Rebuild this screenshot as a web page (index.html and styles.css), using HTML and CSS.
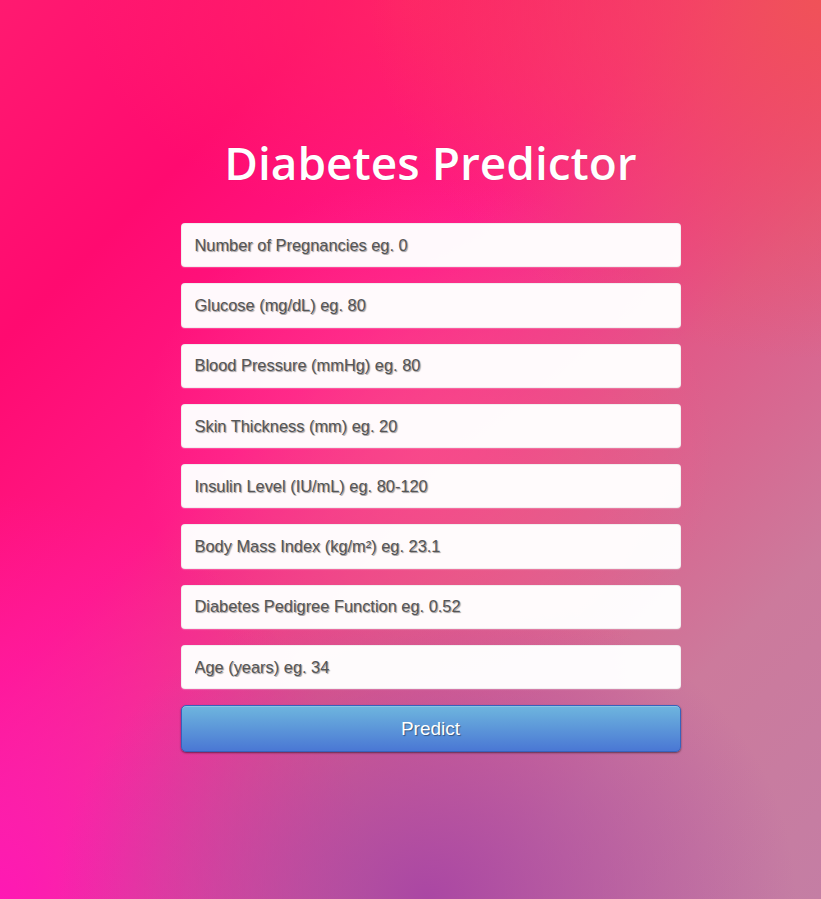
FILE: index.html
```html
<!DOCTYPE html>
<html lang="en">
<head>
<meta charset="utf-8">
<title>Diabetes Predictor</title>
<link rel="stylesheet" href="styles.css">
</head>
<body>
<div class="page">
  <div class="login">
    <h1 class="title">Diabetes Predictor</h1>
    <form class="form">
      <input class="field" type="text" placeholder="Number of Pregnancies eg. 0">
      <input class="field" type="text" placeholder="Glucose (mg/dL) eg. 80">
      <input class="field" type="text" placeholder="Blood Pressure (mmHg) eg. 80">
      <input class="field" type="text" placeholder="Skin Thickness (mm) eg. 20">
      <input class="field" type="text" placeholder="Insulin Level (IU/mL) eg. 80-120">
      <input class="field" type="text" placeholder="Body Mass Index (kg/m²) eg. 23.1">
      <input class="field" type="text" placeholder="Diabetes Pedigree Function eg. 0.52">
      <input class="field" type="text" placeholder="Age (years) eg. 34">
      <button class="btn" type="button">Predict</button>
    </form>
  </div>
</div>
</body>
</html>
```
FILE: styles.css
```css
html, body {
  margin: 0;
  padding: 0;
  width: 100%;
  height: 100%;
}
body {
  font-family: "Liberation Sans", Arial, sans-serif;
  background:
    radial-gradient(ellipse 45% 35% at 52% 100%, rgba(168,68,164,0.95) 0%, rgba(168,68,164,0) 100%),
    radial-gradient(ellipse 45% 45% at 0% 100%, rgba(255,24,180,1) 0%, rgba(255,24,180,0) 100%),
    radial-gradient(ellipse 55% 40% at 100% 0%, rgba(240,82,88,1) 0%, rgba(240,82,88,0) 100%),
    radial-gradient(ellipse 35% 30% at 52% 50%, rgba(255,80,140,0.6) 0%, rgba(255,80,140,0) 100%),
    radial-gradient(ellipse 40% 25% at 50% 0%, rgba(255,40,100,0.8) 0%, rgba(255,40,100,0) 100%),
    linear-gradient(135deg, #ff1a70 0%, #ff0a70 20%, #ff1a88 40%, #e05a88 60%, #cc7a9c 80%, #c47ea4 100%);
  overflow: hidden;
}
.page {
  box-sizing: border-box;
  width: 100%;
  height: 100%;
  padding-left: 40px;
  display: flex;
  justify-content: center;
}
.login {
  width: 500px;
  padding-top: 133px;
}
.title {
  margin: 0 0 32px 0;
  font-family: "Open Sans", sans-serif;
  font-weight: 600;
  font-size: 46px;
  line-height: 58px;
  color: #fff;
  text-align: center;
  text-shadow: 0 0 1px rgba(0,0,0,0.2);
}
.form {
  display: flex;
  flex-direction: column;
  margin: 0;
}
.field {
  box-sizing: border-box;
  width: 100%;
  height: 44.3px;
  margin: 0 0 16px 0;
  padding: 0 13px;
  font-family: "Liberation Sans", Arial, sans-serif;
  font-size: 16.4px;
  color: #555;
  background: rgba(255,255,255,0.975);
  border: 1px solid rgba(0,0,0,0.05);
  border-radius: 4px;
  outline: none;
  text-shadow: 1px 1px 1px rgba(0,0,0,0.4);
  box-shadow: 0 1px 1px rgba(255,255,255,0.2);
}
.field::placeholder {
  color: #555;
  opacity: 1;
}
.btn {
  box-sizing: border-box;
  width: 100%;
  height: 47px;
  margin: 0;
  font-family: "Liberation Sans", Arial, sans-serif;
  font-size: 19px;
  color: #fff;
  text-shadow: 1px 1px 1px rgba(0,0,0,0.4);
  background: linear-gradient(to bottom, #6eb6de, #4a77d4);
  border: 1px solid #3762bc;
  border-radius: 5px;
  box-shadow: inset 0 1px 0 rgba(255,255,255,0.2), 0 1px 2px rgba(0,0,0,0.5);
  cursor: pointer;
}
```
